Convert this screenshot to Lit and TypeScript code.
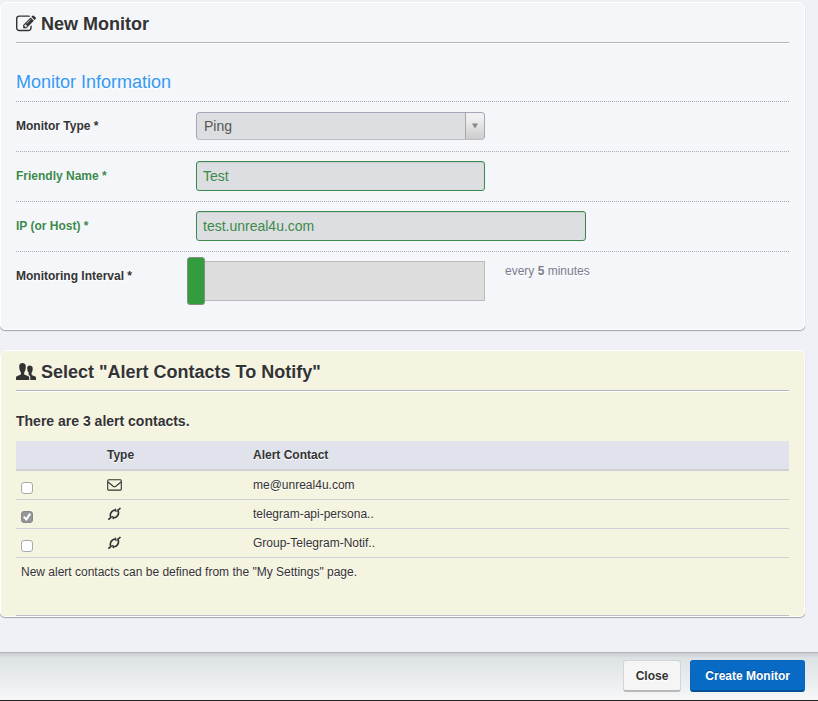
import { LitElement, html, css, svg } from "lit";
import { customElement, state } from "lit/decorators.js";

interface Contact {
  id: string;
  kind: "mail" | "hook";
  name: string;
  on: boolean;
}

const editIcon = svg`<svg class="icon" viewBox="0 0 1792 1792" aria-hidden="true"><path fill="currentColor" d="M888 1184l116-116-152-152-116 116v56h96v96h56zm440-720q-16-16-33 1l-350 350q-17 17-1 33t33-1l350-350q17-17 1-33zm80 594v190q0 119-84.5 203.5t-203.5 84.5h-832q-119 0-203.5-84.5t-84.5-203.5v-832q0-119 84.5-203.5t203.5-84.5h832q63 0 117 25 15 7 18 23 3 17-9 29l-49 49q-14 14-32 8-23-6-45-6h-832q-66 0-113 47t-47 113v832q0 66 47 113t113 47h832q66 0 113-47t47-113v-126q0-13 9-22l64-64q15-15 35-7t20 29zm-96-738l288 288-672 672h-288v-288zm444 132l-92 92-288-288 92-92q28-28 68-28t68 28l152 152q28 28 28 68t-28 68z"/></svg>`;

const groupIcon = svg`<svg class="icon" viewBox="0 0 20 20" aria-hidden="true"><path fill="currentColor" d="M6.300 1C4.300 1 3.200 2.300 3.200 4.200c0 2.600.5 4.700 1.700 6v2.400L.8 14.200Q0 14.600 0 15.600V18h13.200v-2.400q0-1-.8-1.400L8.200 12.600v-2.400c1.100-1.300 1.600-3.400 1.600-6C9.800 2.300 8.500 1 6.300 1z"/><path fill="currentColor" d="M13.700 3.500c-1.300 0-2.300.7-2.500 2.100 0 2.300.4 3.900 1.400 5v2l.1.400q1.600.6 1.600 2V18H20v-2.300q0-.9-.7-1.200l-3.700-1.600v-2.300c.9-1.100 1.100-2.600 1.100-4.600 0-1.500-1.300-2.500-3-2.500z"/></svg>`;

const mailIcon = svg`<svg class="type" viewBox="0 0 15 14" aria-hidden="true"><rect x="0.700" y="1.700" width="13.600" height="10.400" rx="1" fill="none" stroke="currentColor" stroke-width="1.100"/><path d="M1 4l5.200 4.200q1.300 1 2.600 0L14 4" fill="none" stroke="currentColor" stroke-width="1.100"/></svg>`;

const hookIcon = svg`<svg class="type" viewBox="0 0 15 14" aria-hidden="true"><g fill="none" stroke="currentColor"><path d="M8.900 3.200C5.800 2.700 3 5.600 3.300 8.600q.1 1.200 1.200 1.900M5.900 10.700c3.100.5 5.900-2.400 5.600-5.400q-.1-1.200-1.200-1.900" stroke-width="1.700"/><path d="M1.300 12.600l3-2.400M10.500 3.600l3-2.600" stroke-width="1.600"/><path d="M8.300 1.800L9.200 4.900M5.600 9l.9 3.100" stroke-width="1.300"/></g></svg>`;

@customElement("app-root")
export class AppRoot extends LitElement {
  @state() private interval = 5;

  @state() private contacts: Contact[] = [
    { id: "c1", kind: "mail", name: "me@unreal4u.com", on: false },
    { id: "c2", kind: "hook", name: "telegram-api-persona..", on: true },
    { id: "c3", kind: "hook", name: "Group-Telegram-Notif..", on: false },
  ];

  static styles = css`
    :host {
      display: flex;
      flex-direction: column;
      min-height: 100vh;
      box-sizing: border-box;
      background: #f0f1f7;
      border-bottom: 1px solid #222;
      color: #333;
      font: 12px/18px "Liberation Sans", Arial, sans-serif;
      text-shadow: 0 1px 0 #fff;
    }
    *, *::before { box-sizing: border-box; }
    main {
      display: flex;
      flex-direction: column;
      gap: 20px;
      padding: 2px 13px 35px 0;
      flex: 1;
    }
    .panel {
      background: #f5f6fa;
      border: 1px solid #fff;
      border-radius: 5px;
      padding: 0 15px;
      box-shadow: 0 1px 1px #9fa0aa;
    }
    .setup { padding-bottom: 15px; }
    .alerts { background: #f5f4e0; }
    h1, h2 {
      display: flex;
      align-items: center;
      gap: 5px;
      height: 40px;
      margin: 0;
      padding-top: 2px;
      border-bottom: 1px solid #b4b5bc;
      box-shadow: 0 1px 0 #fff;
      font-size: 18px;
      line-height: 24px;
    }
    .icon { width: 20px; height: 20px; flex: none; }
    h3 {
      margin: 0;
      padding: 27px 0 6px;
      font-size: 18px;
      line-height: 25px;
      font-weight: 400;
      color: #3399f3;
    }
    .row {
      display: grid;
      grid-template-columns: 180px 1fr;
      border-top: 1px dotted #aaabb0;
      padding: 9px 0;
      min-height: 50px;
    }
    .row label { font-weight: 700; padding-top: 6px; }
    .ok label { color: #3c8a4b; }
    input[type="text"], select {
      width: 289px;
      max-width: 100%;
      height: 30px;
      margin: 0;
      padding: 0 6px;
      border: 1px solid #3c8a4b;
      border-radius: 3px;
      background: #dddee1;
      box-shadow: inset 0 1px 1px #cdced1;
      color: #3c8a4b;
      font: 14px/20px "Liberation Sans", Arial, sans-serif;
      outline: none;
    }
    input.wide { width: 390px; }
    .pick { position: relative; width: 289px; max-width: 100%; height: 28px; margin-top: 1px; }
    select {
      appearance: none;
      width: 100%;
      height: 28px;
      padding: 0 7px;
      border-color: #a5a6b8;
      border-bottom-color: #bbbcc6;
      border-radius: 4px;
      box-shadow: none;
      color: #555;
      text-shadow: none;
    }
    .arrow {
      position: absolute;
      inset: 1px 1px 1px auto;
      width: 19px;
      border-left: 1px solid #a5a6b0;
      border-radius: 0 3px 3px 0;
      background: linear-gradient(#f0f0f0 20%, #cccccc);
      pointer-events: none;
      display: grid;
      place-items: center;
    }
    .arrow svg { width: 6px; height: 6px; }
    .slide { display: flex; gap: 20px; align-items: flex-start; }
    input[type="range"] {
      appearance: none;
      width: 298px;
      height: 48px;
      margin: -4px 0 0 -9px;
      background: linear-gradient(#ddd, #ddd) 10px 5px / 287px 38px no-repeat,
        linear-gradient(#bbb, #bbb) 9px 4px / 289px 40px no-repeat;
      outline: none;
    }
    input[type="range"]::-webkit-slider-thumb {
      appearance: none;
      width: 18px;
      height: 48px;
      border: 1px solid #858f80;
      border-radius: 3px;
      background: #339c3e;
    }
    output { padding-top: 1px; color: #7a7b8c; }
    .count { margin: 0; padding: 20px 0 10px; font-size: 14px; line-height: 20px; font-weight: 700; }
    table { width: 100%; table-layout: fixed; border-collapse: separate; border-spacing: 0; }
    .c1 { width: 86px; }
    .c2 { width: 146px; }
    th { height: 30px; padding: 0 5px; text-align: left; background: #e0e3ec; border-bottom: 2px solid #cfd0d4; }
    td { height: 29px; padding: 0 5px; border-bottom: 1px solid #cfd0d6; }
    td input {
      appearance: none;
      display: grid;
      place-items: center;
      width: 12px;
      height: 12px;
      margin: 6px 0 0;
      border: 1px solid #a9a9ad;
      border-radius: 3px;
      background: #fff;
    }
    td input:checked { background: #96969a; border-color: #88888c; }
    td input:checked::before {
      content: "";
      width: 8px;
      height: 8px;
      background: #fff;
      clip-path: polygon(0 55%, 18% 38%, 40% 60%, 78% 0, 100% 15%, 45% 100%);
    }
    .type { display: block; width: 15px; height: 14px; }
    .note { margin: 0; padding: 5px 5px 34px; border-bottom: 1px solid #bfc0c6; }
    footer {
      display: flex;
      justify-content: flex-end;
      gap: 9px;
      padding: 7px 13px 8px;
      border-top: 1px solid #b3b4ba;
      background: linear-gradient(#c9cccf, #dde2e4 5px, #f6f7f9);
    }
    button {
      height: 32px;
      border: 1px solid #d5d5d5;
      border-bottom: 2px solid #b8b8b8;
      border-radius: 3px;
      padding: 0 12px;
      background: #f5f5f5;
      color: #333;
      font: 700 12px/18px "Liberation Sans", Arial, sans-serif;
      text-shadow: 0 1px 0 #fff;
    }
    .go {
      padding: 0 14px;
      border-color: #0a66ba;
      border-bottom-color: #044f96;
      background: #076bc6;
      color: #fff;
      text-shadow: 0 -1px 0 #044f96;
    }
  `;

  private toggle(id: string) {
    this.contacts = this.contacts.map((c) => (c.id === id ? { ...c, on: !c.on } : c));
  }

  render() {
    return html`
      <main>
        <section class="panel setup">
          <h1>${editIcon}<span>New Monitor</span></h1>
          <h3>Monitor Information</h3>
          <div class="row">
            <label for="type">Monitor Type *</label>
            <div class="pick">
              <select id="type"><option>Ping</option></select>
              <span class="arrow"><svg viewBox="0 0 7 6"><path d="M0 0h7L3.500 6z" fill="#888" /></svg></span>
            </div>
          </div>
          <div class="row ok">
            <label for="name">Friendly Name *</label>
            <div><input id="name" type="text" value="Test" /></div>
          </div>
          <div class="row ok">
            <label for="host">IP (or Host) *</label>
            <div><input id="host" class="wide" type="text" value="test.unreal4u.com" /></div>
          </div>
          <div class="row">
            <label for="interval">Monitoring Interval *</label>
            <div class="slide">
              <input id="interval" type="range" min="5" max="120" step="5" .value=${String(this.interval)}
                @input=${(e: Event) => (this.interval = Number((e.target as HTMLInputElement).value))} />
              <output for="interval">every <b>${this.interval}</b> minutes</output>
            </div>
          </div>
        </section>
        <section class="panel alerts">
          <h2>${groupIcon}<span>Select "Alert Contacts To Notify"</span></h2>
          <p class="count">There are ${this.contacts.length} alert contacts.</p>
          <table>
            <thead>
              <tr><th class="c1"></th><th class="c2">Type</th><th>Alert Contact</th></tr>
            </thead>
            <tbody>
              ${this.contacts.map(
                (c) => html`<tr>
                  <td><input type="checkbox" id=${c.id} .checked=${c.on} @change=${() => this.toggle(c.id)} /></td>
                  <td>${c.kind === "mail" ? mailIcon : hookIcon}</td>
                  <td><label for=${c.id}>${c.name}</label></td>
                </tr>`
              )}
            </tbody>
          </table>
          <p class="note">New alert contacts can be defined from the "My Settings" page.</p>
        </section>
      </main>
      <footer>
        <button type="button">Close</button>
        <button type="button" class="go">Create Monitor</button>
      </footer>
    `;
  }
}
